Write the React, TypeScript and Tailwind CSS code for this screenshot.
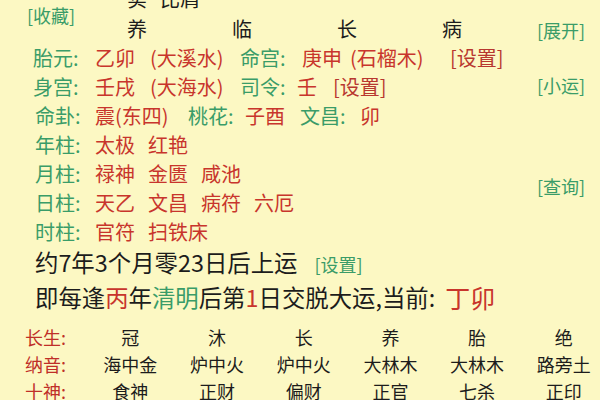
import React from 'react';

const green = 'text-[#3a9c68]';
const red = 'text-[#c8352c]';

const Label: React.FC<{ text: string; w?: string }> = ({ text, w = 'w-[62px]' }) => (
  <span className={`${w} shrink-0 ${green}`}>{text}</span>
);

const Val: React.FC<{ text: string; w: string; color?: string }> = ({ text, w, color = red }) => (
  <span className={`${w} shrink-0 whitespace-nowrap ${color}`}>{text}</span>
);

const App: React.FC = () => {
  const shenSha: [string, string[]][] = [
    ['年柱:', ['太极', '红艳']],
    ['月柱:', ['禄神', '金匮', '咸池']],
    ['日柱:', ['天乙', '文昌', '病符', '六厄']],
    ['时柱:', ['官符', '扫铁床']],
  ];

  const table: [string, string[]][] = [
    ['长生:', ['冠', '沐', '长', '养', '胎', '绝']],
    ['纳音:', ['海中金', '炉中火', '炉中火', '大林木', '大林木', '路旁土']],
    ['十神:', ['食神', '正财', '偏财', '正官', '七杀', '正印']],
  ];

  return (
    <div className="w-[600px] h-[400px] overflow-hidden bg-[#fcf8c3] text-[#1c1c1c] font-['Noto_Sans_CJK_SC','Noto_Sans',sans-serif]">
      <div className="flex">
        {/* Left content */}
        <div className="w-[537px] shrink-0">
          {/* Header */}
          <div className="flex">
            <div className={`w-[127px] shrink-0 pl-[27px] pt-[3px] text-[18px] leading-[24px] ${green}`}>[收藏]</div>
            <div className="flex-1 flex flex-col">
              <div className="h-[13.5px] flex flex-col">
                <div className="-mt-[16px] text-[20px] leading-[29px] whitespace-nowrap">
                  <span className="mr-[13px]">实</span>比肩
                </div>
              </div>
              <div className="flex h-[29px] text-[20px] leading-[29px]">
                <span className="w-[105px]">养</span>
                <span className="w-[105px]">临</span>
                <span className="w-[105px]">长</span>
                <span className="w-[105px]">病</span>
              </div>
            </div>
          </div>

          {/* Info rows */}
          <div className="text-[20px] leading-[29px]">
            <div className="flex h-[29px] pl-[33px]">
              <Label text="胎元:" />
              <Val text="乙卯" w="w-[55px]" />
              <Val text="(大溪水)" w="w-[90px]" />
              <Label text="命宫:" />
              <Val text="庚申" w="w-[48px]" />
              <Val text="(石榴木)" w="w-[100px]" />
              <Val text="[设置]" w="w-[60px]" color="text-[#b8372f]" />
            </div>
            <div className="flex h-[29px] pl-[33px]">
              <Label text="身宫:" />
              <Val text="壬戌" w="w-[55px]" />
              <Val text="(大海水)" w="w-[90px]" />
              <Label text="司令:" w="w-[57px]" />
              <Val text="壬" w="w-[36px]" />
              <Val text="[设置]" w="w-[60px]" color="text-[#b8372f]" />
            </div>
            <div className="flex h-[29px] pl-[35px]">
              <Label text="命卦:" w="w-[60px]" />
              <Val text="震(东四)" w="w-[93px]" />
              <Label text="桃花:" w="w-[57px]" />
              <Val text="子酉" w="w-[55px]" />
              <Label text="文昌:" w="w-[60px]" />
              <Val text="卯" w="w-[30px]" />
            </div>
            {shenSha.map(([label, items]) => (
              <div key={label} className="flex h-[29px] pl-[35px]">
                <Label text={label} w="w-[60px]" />
                <div className={`flex gap-[13px] ${red}`}>
                  {items.map((it, i) => (
                    <span key={i}>{it}</span>
                  ))}
                </div>
              </div>
            ))}
          </div>
        </div>

        {/* Right column buttons */}
        <div className={`flex-1 flex flex-col text-[18px] leading-[24px] ${green}`}>
          <span className="mt-[18px]">[展开]</span>
          <span className="mt-[31px]">[小运]</span>
          <span className="mt-[77px]">[查询]</span>
        </div>
      </div>

      {/* Start of luck */}
      <div className="flex items-center h-[33px] pl-[35px] text-[23.4px] leading-[33px] whitespace-nowrap">
        <span>约7年3个月零23日后上运</span>
        <span className={`ml-[17px] text-[18px] pt-[5px] ${green}`}>[设置]</span>
      </div>
      <div className="flex items-center h-[36px] pl-[35px] text-[23.4px] leading-[36px] whitespace-nowrap">
        <span>
          即每逢<span className={red}>丙</span>年<span className={green}>清明</span>后第<span className={red}>1</span>日交脱大运,当前:
        </span>
        <span className={`ml-[10px] text-[25px] ${red}`}>丁卯</span>
      </div>

      {/* Table */}
      <div className="mt-[9px] text-[18px] leading-[27px]">
        {table.map(([label, items]) => (
          <div key={label} className="grid grid-cols-[87px_repeat(6,86.7px)] h-[27px]">
            <span className={`pl-[25px] text-[#bf2f28]`}>{label}</span>
            {items.map((it, i) => (
              <span key={i} className="text-center whitespace-nowrap">{it}</span>
            ))}
          </div>
        ))}
      </div>
    </div>
  );
};

export default App;
